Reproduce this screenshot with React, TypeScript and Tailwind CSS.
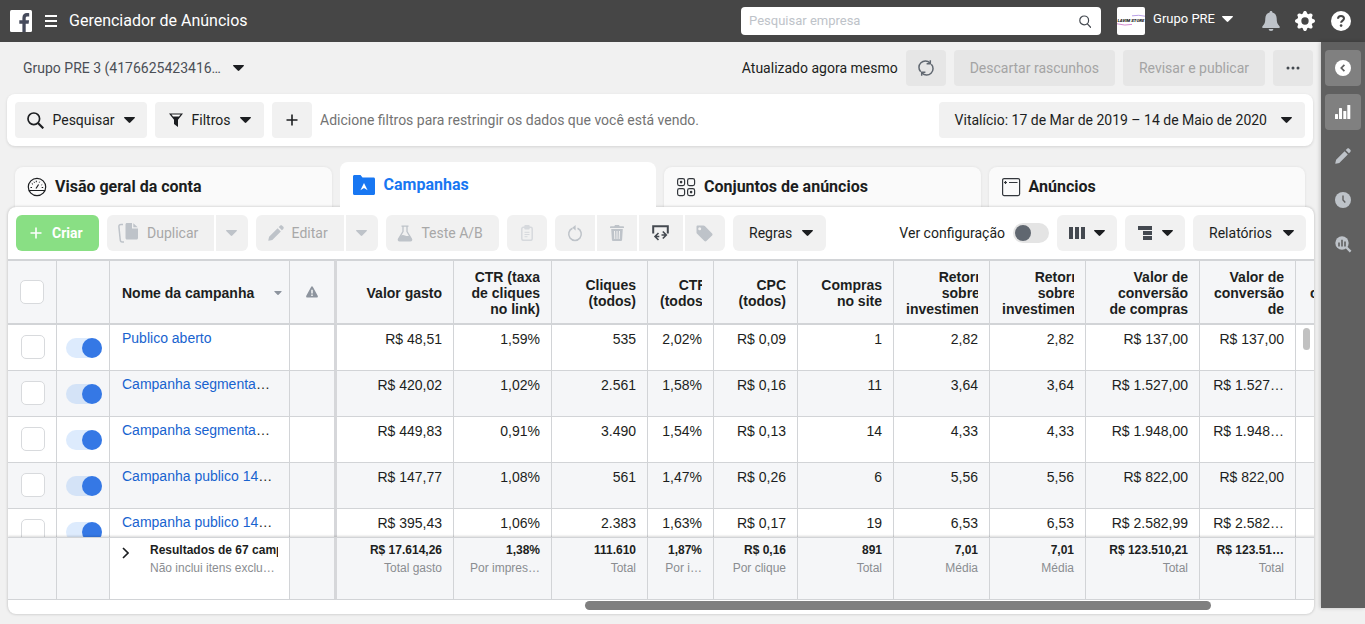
import React from "react";
import { BsGearFill } from "react-icons/bs";

const CARET = "M0 .6C0 .2.3 0 .7 0h9.6c.6 0 .9.7.5 1.1L6.3 5.6c-.4.5-1.2.5-1.6 0L.2 1.1A.7.7 0 0 1 0 .6Z";

function Caret({ className = "text-[#1c1e21]" }: { className?: string }) {
  return (
    <svg width="11" height="6" viewBox="0 0 11 6" className={`shrink-0 ${className}`} fill="currentColor" aria-hidden="true">
      <path d={CARET} />
    </svg>
  );
}

function Btn({ children, className = "", label }: { children: React.ReactNode; className?: string; label?: string }) {
  return (
    <button type="button" aria-label={label} className={`flex h-9 shrink-0 items-center justify-center whitespace-nowrap ${className}`}>
      {children}
    </button>
  );
}

function Header() {
  return (
    <header className="flex h-[42px] shrink-0 items-center bg-[#464646] text-white">
      <a href="#" aria-label="Facebook" className="ml-[10px] block">
        <svg width="22" height="22" viewBox="0 0 22 22" aria-hidden="true">
          <rect width="22" height="22" rx="1.5" fill="#fff" />
          <path d="M12.4 22v-8.2H9.3v-3.5h3.1V7.9c0-3.1 1.8-4.800 4.600-4.800.9 0 1.800.1 2.200.1v3.200h-1.700c-1.300 0-1.800.7-1.800 1.700v2.200h3.400l-.5 3.500h-2.900V22Z" fill="#464b5c" />
        </svg>
      </a>
      <button type="button" aria-label="Menu" className="ml-[13px] flex w-3 flex-col gap-[3px]">
        <span className="h-[2px] w-full bg-white" />
        <span className="h-[2px] w-full bg-white" />
        <span className="h-[2px] w-full bg-white" />
      </button>
      <h1 className="ml-3 text-base">Gerenciador de Anúncios</h1>
      <div className="ml-auto flex h-7 w-[360px] items-center rounded bg-white pl-2 pr-[10px]">
        <input type="text" aria-label="Pesquisar empresa" placeholder="Pesquisar empresa" className="min-w-0 flex-1 bg-transparent text-[13px] text-[#1c1e21] outline-none placeholder:text-[#bec3c9]" />
        <svg width="12" height="13" viewBox="0 0 12 13" fill="none" stroke="#444950" strokeWidth="1.2" aria-hidden="true">
          <circle cx="5.2" cy="5.4" r="4.4" />
          <path d="m8.4 8.8 3.2 3.5" strokeLinecap="round" />
        </svg>
      </div>
      <button type="button" className="ml-4 flex items-center text-[13px]">
        <svg width="28" height="28" viewBox="0 0 28 28" aria-hidden="true">
          <rect width="28" height="28" rx="2" fill="#fff" />
          <path d="M15 8.800q7-1.200 13 .4" fill="none" stroke="#b9a0e6" strokeWidth="1" />
          <path d="M0 16.800q8 2.200 15 .6" fill="none" stroke="#d58bd0" strokeWidth="1" />
          <text x="0.500" y="14.800" fontSize="4.300" fontWeight="900" fontStyle="italic" fontFamily="Roboto, sans-serif" fill="#161616">LAVIM STORE</text>
        </svg>
        <span className="flex items-center pb-1 pl-2">
          <span className="mr-[7px]">Grupo PRE</span>
          <Caret className="text-white" />
        </span>
      </button>
      <button type="button" aria-label="Notificações" className="ml-[29px]">
        <svg width="18" height="22" viewBox="0 0 18 22" fill="#bec3c9" aria-hidden="true">
          <path d="M9 1c.9 0 1.400.6 1.400 1.400 2.700.6 4.300 2.900 4.300 6.100 0 3.800.6 5.400 2.800 7.700.6.700.300 1.800-.8 1.800H1.300c-1.100 0-1.400-1.100-.8-1.800 2.200-2.300 2.800-3.900 2.800-7.700 0-3.200 1.600-5.500 4.300-6.100C7.600 1.600 8.100 1 9 1Z" />
          <path d="M6.600 19h4.800a2.400 2 0 0 1-4.800 0Z" />
        </svg>
      </button>
      <button type="button" aria-label="Configurações" className="ml-[15px]">
        <BsGearFill size={20} aria-hidden="true" />
      </button>
      <button type="button" aria-label="Ajuda" className="ml-4 mr-[14px]">
        <svg width="20" height="20" viewBox="0 0 20 20" aria-hidden="true">
          <circle cx="10" cy="10" r="10" fill="#fff" />
          <path d="M7 7.800c0-1.700 1.200-2.800 3-2.800s3 1.100 3 2.600c0 2-2.900 2-2.900 4.200" fill="none" stroke="#464646" strokeWidth="2" />
          <circle cx="10.100" cy="14.600" r="1.300" fill="#464646" />
        </svg>
      </button>
    </header>
  );
}

function Sidebar() {
  const item = "flex size-9 items-center justify-center rounded";
  return (
    <nav aria-label="Ferramentas" className="mb-4 flex w-11 shrink-0 flex-col items-center gap-2 bg-[#606060] pt-2 text-[#bec3c9] shadow-[-1px_0_4px_rgba(0,0,0,0.2)]">
      <button type="button" aria-label="Recolher" className={`${item} bg-[#808080]`}>
        <svg width="16" height="16" viewBox="0 0 16 16" aria-hidden="true">
          <circle cx="8" cy="8" r="8" fill="#fff" />
          <path d="M9.400 4.800 6.300 8l3.100 3.200" fill="none" stroke="#606060" strokeWidth="1.700" />
        </svg>
      </button>
      <button type="button" aria-label="Gráficos" className={`${item} bg-[#808080]`}>
        <svg width="16" height="14" viewBox="0 0 16 14" fill="#fff" aria-hidden="true">
          <rect x="0" y="9" width="3" height="5" rx=".6" />
          <rect x="4" y="3" width="3" height="11" rx=".6" />
          <rect x="8.300" y="6" width="3" height="8" rx=".6" />
          <rect x="12.300" y="0" width="3" height="14" rx=".6" />
        </svg>
      </button>
      <button type="button" aria-label="Editar" className={item}>
        <Pencil />
      </button>
      <button type="button" aria-label="Histórico" className={item}>
        <svg width="16" height="16" viewBox="0 0 16 16" aria-hidden="true">
          <circle cx="8" cy="8" r="8" fill="currentColor" />
          <path d="M8 3.500V8l2.300 2.500" fill="none" stroke="#606060" strokeWidth="1.400" />
        </svg>
      </button>
      <button type="button" aria-label="Inspecionar" className={item}>
        <svg width="17" height="17" viewBox="0 0 17 17" aria-hidden="true">
          <circle cx="7" cy="7" r="6.700" fill="currentColor" />
          <path d="m11 11 4.600 4.600" stroke="currentColor" strokeWidth="2.400" />
          <path d="M4 6.500v4M7 3.800v6.700M10 5.500v5" stroke="#606060" strokeWidth="1.600" />
        </svg>
      </button>
    </nav>
  );
}

function Pencil() {
  return (
    <svg width="16" height="16" viewBox="0 0 16 16" fill="currentColor" aria-hidden="true">
      <path d="M9.600 3.200 12.800 6.400 4.300 14.900 0.700 15.700c-.3.100-.5-.1-.4-.4l.8-3.600Z" />
      <path d="m10.700 2.100 1.400-1.400c.6-.6 1.500-.6 2.100 0l1.100 1.100c.6.6.6 1.500 0 2.100l-1.400 1.400Z" />
    </svg>
  );
}

function AccountBar() {
  const off = "rounded bg-[#e6e6e6] px-4 text-[#a4a4a4]";
  return (
    <div className="flex h-[52px] shrink-0 items-center gap-2 pl-4">
      <button type="button" className="flex items-center text-[#4b4f56]">
        <span>Grupo PRE 3 (4176625423416…</span>
        <span className="ml-3"><Caret /></span>
      </button>
      <span className="ml-auto text-[#1c1e21]">Atualizado agora mesmo</span>
      <Btn label="Atualizar" className="w-10 rounded bg-[#e6e6e6]">
        <svg width="16" height="16" viewBox="0 0 16 16" fill="none" stroke="#606770" strokeWidth="1.500" aria-hidden="true">
          <path d="M2.700 11.800A6.400 6.400 0 0 1 12 3M13.300 4.200A6.400 6.400 0 0 1 4 13" />
          <path d="M12.300.2v3.600H8.600M3.700 15.800v-3.600h3.700" />
        </svg>
      </Btn>
      <Btn className={off}>Descartar rascunhos</Btn>
      <Btn className={off}>Revisar e publicar</Btn>
      <Btn label="Mais opções" className="w-10 rounded bg-[#e6e6e6]">
        <svg width="14" height="4" viewBox="0 0 14 4" fill="#444950" aria-hidden="true">
          <circle cx="2" cy="2" r="1.500" />
          <circle cx="7" cy="2" r="1.500" />
          <circle cx="12" cy="2" r="1.500" />
        </svg>
      </Btn>
    </div>
  );
}

function FilterBar() {
  const b = "rounded bg-[#f1f1f1] text-[#1c1e21]";
  return (
    <section className="flex h-[52px] shrink-0 items-center gap-2 rounded-lg bg-white px-2 shadow-[0_1px_3px_rgba(0,0,0,0.12)]">
      <Btn className={`${b} w-[132px] gap-2`}>
        <svg width="17" height="17" viewBox="0 0 17 17" fill="none" stroke="#1c1e21" strokeWidth="1.700" aria-hidden="true">
          <circle cx="6.800" cy="6.800" r="5.800" />
          <path d="m11 11 5.300 5.300" strokeWidth="2.200" />
        </svg>
        <span className="mr-px">Pesquisar</span>
        <Caret />
      </Btn>
      <Btn className={`${b} w-[109px] gap-2`}>
        <svg width="16" height="16" viewBox="0 0 16 16" aria-hidden="true">
          <path d="M1 1.500h14l-5 6.300V15L6 12V7.800Z" fill="#1c1e21" />
          <path d="M3.400 2.600h9.200L11 4.600H5Z" fill="#fff" />
        </svg>
        <span className="mr-[2px]">Filtros</span>
        <Caret />
      </Btn>
      <Btn label="Adicionar filtro" className={`${b} w-10`}>
        <svg width="12" height="12" viewBox="0 0 12 12" stroke="#1c1e21" strokeWidth="1.600" aria-hidden="true">
          <path d="M6 .5v11M.5 6h11" />
        </svg>
      </Btn>
      <span className="min-w-0 flex-1 truncate text-[#737373]">Adicione filtros para restringir os dados que você está vendo.</span>
      <Btn className={`${b} px-[13px]`}>
        <span className="ml-[3px] mr-[14px]">Vitalício: 17 de Mar de 2019 – 14 de Maio de 2020</span>
        <Caret />
      </Btn>
    </section>
  );
}

function Tabs() {
  const t = "flex h-[41px] items-center rounded-t-lg bg-[#fafafa] pb-0.5 pl-3 text-base font-bold text-[#1c1e21] shadow-[0_0_3px_rgba(0,0,0,0.08)]";
  return (
    <div role="tablist" className="grid shrink-0 grid-cols-4 items-end gap-2 px-2 pt-4">
      <button type="button" role="tab" aria-selected="false" className={t}>
        <svg width="20" height="20" viewBox="0 0 20 20" fill="none" stroke="#1c1e21" aria-hidden="true">
          <circle cx="10" cy="10" r="8.700" strokeWidth="1.200" />
          <path d="M2 13.500h16M9 11.500l2.600-4" strokeWidth="1.200" />
          <path d="M3.500 10.500h1.500M4.800 6.500l1.200.8M9.300 3.700v1.500M14.700 10.500h1.500M7 4.800l.5 1M15.200 7.500l-.8.5M12.700 4.700l-.4.900" />
        </svg>
        <span className="ml-2">Visão geral da conta</span>
      </button>
      <button type="button" role="tab" aria-selected="true" className="relative z-20 flex h-[46px] items-center rounded-t-lg bg-white pl-[13px] text-base font-bold text-[#1877f2]">
        <svg width="22" height="20" viewBox="0 0 22 20" aria-hidden="true">
          <path d="M0 1.500C0 .6.600 0 1.500 0h6l2 2.500h11c.9 0 1.500.6 1.500 1.500v14.500c0 .9-.6 1.500-1.500 1.500h-19C.6 20 0 19.400 0 18.500Z" fill="#1877f2" />
          <path d="m11 8 3.600 7.200L11 13.100l-3.600 2.100Z" fill="#fff" />
        </svg>
        <span className="ml-[9px]">Campanhas</span>
      </button>
      <button type="button" role="tab" aria-selected="false" className={t}>
        <svg width="20" height="20" viewBox="0 0 20 20" fill="none" stroke="#33373c" strokeWidth="1.200" aria-hidden="true">
          <rect x="1.600" y="1.600" width="7" height="7" rx="1.800" />
          <rect x="11.600" y="1.600" width="7" height="7" rx="1.800" />
          <rect x="1.600" y="11.600" width="7" height="7" rx="1.800" />
          <rect x="11.600" y="11.600" width="7" height="7" rx="1.800" />
          <circle cx="5.100" cy="5.100" r=".7" fill="#33373c" />
          <circle cx="15.100" cy="15.100" r=".7" fill="#33373c" />
        </svg>
        <span className="ml-2">Conjuntos de anúncios</span>
      </button>
      <button type="button" role="tab" aria-selected="false" className={t}>
        <svg width="20" height="20" viewBox="0 0 20 20" fill="none" stroke="#33373c" strokeWidth="1.200" aria-hidden="true">
          <rect x="1.600" y="1.600" width="17" height="17" rx="1.500" />
          <path d="M8 5.500h8.500M4.500 4v3M3 5.500h3" />
        </svg>
        <span className="ml-2">Anúncios</span>
      </button>
    </div>
  );
}

function Toolbar() {
  const off = "bg-[#f1f1f1] text-[#bec3c9]";
  const txt = "text-[#a8a8a8]";
  const on = "rounded-md bg-[#f1f1f1] text-[#1c1e21]";
  return (
    <div className="flex h-[52px] shrink-0 items-center gap-2 px-2">
      <Btn className="gap-[10px] rounded-md bg-[#89df84] px-[14px] pr-4 font-bold text-white">
        <svg width="12" height="12" viewBox="0 0 12 12" stroke="#fff" strokeWidth="1.600" aria-hidden="true">
          <path d="M6 .5v11M.5 6h11" />
        </svg>
        Criar
      </Btn>
      <div className="flex gap-[2px]">
        <Btn className={`${off} w-[107px] gap-2 rounded-l-md pr-1`}>
          <svg width="21" height="20" viewBox="0 0 21 20" aria-hidden="true">
            <path d="M5 1.500H3C1.600 1.500.8 2.400.9 3.700L2.200 16.500c.1 1.400.9 2.600 2 2.600H6" fill="none" stroke="currentColor" strokeWidth="1.500" />
            <path d="M7.500 1.500C7.500.6 8.100 0 9 0h5v5.500h6v9.500c0 .9-.6 1.500-1.500 1.500H9c-.9 0-1.500-.6-1.500-1.500ZM15.300.3l4.400 4h-4.400Z" fill="currentColor" />
          </svg>
          <span className={txt}>Duplicar</span>
        </Btn>
        <Btn label="Opções de duplicação" className={`${off} w-8 rounded-r-md`}><Caret className="text-[#bec3c9]" /></Btn>
      </div>
      <div className="flex gap-[2px]">
        <Btn className={`${off} w-[88px] gap-2 rounded-l-md pr-1`}>
          <Pencil />
          <span className={txt}>Editar</span>
        </Btn>
        <Btn label="Opções de edição" className={`${off} w-8 rounded-r-md`}><Caret className="text-[#bec3c9]" /></Btn>
      </div>
      <Btn className={`${off} w-[113px] gap-2 rounded-md pr-1`}>
        <svg width="16" height="17" viewBox="0 0 16 17" aria-hidden="true">
          <path d="M4.500 1.200h7M6 1v5.500L1.500 14c-.4.900 0 1.800 1 1.800h11c1 0 1.400-.9 1-1.800L10 6.500V1" fill="none" stroke="currentColor" strokeWidth="1.300" />
          <path d="M3.500 10.500q2.500-1 4.500 0t4.500 0l2.200 4c.3.800-.2 1.500-1 1.500H2.300c-.8 0-1.300-.7-1-1.500Z" fill="currentColor" />
        </svg>
        <span className={txt}>Teste A/B</span>
      </Btn>
      <Btn label="Colar" className="w-10 rounded-md bg-[#f1f1f1] text-[#d6d9dd]">
        <svg width="12" height="16" viewBox="0 0 12 16" aria-hidden="true">
          <rect x=".8" y="2.300" width="10.400" height="13" rx="1.500" fill="none" stroke="currentColor" strokeWidth="1.500" />
          <rect x="3.300" y="0" width="5.400" height="4.500" rx="1" fill="currentColor" />
          <path d="M3.500 7.300h5M3.500 9.500h5M3.500 11.700h3" stroke="currentColor" />
        </svg>
      </Btn>
      <div className="flex gap-[2px]">
        <Btn label="Reverter" className={`${off} w-10 rounded-l-md`}>
          <svg width="16" height="17" viewBox="0 0 16 17" aria-hidden="true">
            <path d="M5.500 3.300a6.300 6.300 0 1 0 5 0" fill="none" stroke="currentColor" strokeWidth="1.500" />
            <path d="M8.600 0v5.500L5.300 2.700Z" fill="currentColor" />
          </svg>
        </Btn>
        <Btn label="Excluir" className={`${off} w-10`}>
          <svg width="14" height="16" viewBox="0 0 14 16" fill="currentColor" aria-hidden="true">
            <path d="M5 0h4l.7 1.200h3.500c.5 0 .8.3.8.8v1H0V2c0-.5.300-.8.800-.8h3.500Z" />
            <path fillRule="evenodd" d="M1.200 4h11.600l-.7 10.700c-.1.800-.6 1.300-1.400 1.300H3.300c-.8 0-1.300-.5-1.400-1.300ZM4 6l.3 8h1L5 6Zm2.500 0v8h1V6ZM9 6l-.3 8h1L10 6Z" />
          </svg>
        </Btn>
        <Btn label="Exportar" className="w-11 bg-[#f1f1f1]">
          <svg width="17" height="16" viewBox="0 0 17 16" fill="none" stroke="#444950" strokeWidth="2" aria-hidden="true">
            <path d="M1.200 8.500V1.300h14.600V8.500" />
            <path d="M7.300 11.500H3.500m3-3.500L3 11.500 6.500 15M9.500 10H14m-3.200-3.500L14.300 10l-3.500 3.500" strokeWidth="1.600" />
          </svg>
        </Btn>
        <Btn label="Marcadores" className={`${off} w-10 rounded-r-md`}>
          <svg width="17" height="17" viewBox="0 0 17 17" fill="currentColor" aria-hidden="true">
            <path fillRule="evenodd" d="M.5 1.800C.5 1 1 .5 1.800.5h5.600c.6 0 1 .2 1.400.6l7.300 7.300c.6.600.6 1.500 0 2l-5.700 5.700c-.5.600-1.400.6-2 0L1.100 8.800C.7 8.400.5 8 .5 7.400ZM3.700 2.300a1.500 1.500 0 1 0 0 3 1.500 1.500 0 0 0 0-3Z" />
          </svg>
        </Btn>
      </div>
      <Btn className={`${on} w-[93px] gap-[10px] pl-1`}>Regras <Caret /></Btn>
      <label className="ml-auto flex items-center gap-2 whitespace-nowrap text-[#1c1e21]">
        Ver configuração
        <input type="checkbox" role="switch" className="h-5 w-9 appearance-none rounded-full bg-[#e4e4e4] before:block before:size-4 before:translate-x-[2px] before:translate-y-[2px] before:rounded-full before:bg-[#606770]" />
      </label>
      <Btn label="Colunas" className={`${on} w-[60px] gap-[9px]`}>
        <svg width="16" height="12" viewBox="0 0 16 12" fill="#444950" aria-hidden="true">
          <path d="M0 0h4v12H0ZM6 0h4v12H6ZM12 0h4v12h-4Z" />
        </svg>
        <Caret />
      </Btn>
      <Btn label="Detalhamento" className={`${on} w-[60px] gap-[10px]`}>
        <svg width="14" height="14" viewBox="0 0 14 14" fill="#444950" aria-hidden="true">
          <path d="M0 0h14v4H0ZM5 5h9v4H5ZM5 10h9v4H5Z" />
        </svg>
        <Caret />
      </Btn>
      <Btn className={`${on} w-[113px] gap-[11px] pl-1`}>Relatórios <Caret /></Btn>
    </div>
  );
}

type Column = { head: string[]; cells: string[]; total: string; note: string };

const columns: Column[] = [
  { head: ["Valor gasto"], cells: ["R$ 48,51", "R$ 420,02", "R$ 449,83", "R$ 147,77", "R$ 395,43"], total: "R$ 17.614,26", note: "Total gasto" },
  { head: ["CTR (taxa", "de cliques", "no link)"], cells: ["1,59%", "1,02%", "0,91%", "1,08%", "1,06%"], total: "1,38%", note: "Por impres…" },
  { head: ["Cliques", "(todos)"], cells: ["535", "2.561", "3.490", "561", "2.383"], total: "111.610", note: "Total" },
  { head: ["CTR", "(todos)"], cells: ["2,02%", "1,58%", "1,54%", "1,47%", "1,63%"], total: "1,87%", note: "Por i…" },
  { head: ["CPC", "(todos)"], cells: ["R$ 0,09", "R$ 0,16", "R$ 0,13", "R$ 0,26", "R$ 0,17"], total: "R$ 0,16", note: "Por clique" },
  { head: ["Compras", "no site"], cells: ["1", "11", "14", "6", "19"], total: "891", note: "Total" },
  { head: ["Retorno", "sobre o", "investimento"], cells: ["2,82", "3,64", "4,33", "5,56", "6,53"], total: "7,01", note: "Média" },
  { head: ["Retorno", "sobre o", "investimento"], cells: ["2,82", "3,64", "4,33", "5,56", "6,53"], total: "7,01", note: "Média" },
  { head: ["Valor de", "conversão", "de compras"], cells: ["R$ 137,00", "R$ 1.527,00", "R$ 1.948,00", "R$ 822,00", "R$ 2.582,99"], total: "R$ 123.510,21", note: "Total" },
  { head: ["Valor de", "conversão", "de"], cells: ["R$ 137,00", "R$ 1.527…", "R$ 1.948…", "R$ 822,00", "R$ 2.582…"], total: "R$ 123.51…", note: "Total" },
  { head: ["conversão"], cells: ["", "", "", "", ""], total: "", note: "" },
];

const names = ["Publico aberto", "Campanha segmenta", "Campanha segmenta", "Campanha publico 14", "Campanha publico 14"];

function Grid() {
  const th = "border-b-2 border-t-2 border-r border-[#d2d4d7] bg-[#f5f6f8] p-0 align-middle";
  const td = "border-b border-r border-[#d2d4d7] p-0 align-top";
  const tf = "border-b border-t border-r border-[#d2d4d7] bg-[#f5f6f8] p-0 align-top";
  const edge = "border-r-[3px] border-r-[#d6d7da]";
  const check = "block size-6 appearance-none rounded-[5px] border border-[#d8dadd] bg-white";
  return (
    <div className="relative min-h-0 flex-1 overflow-hidden">
      <table className="w-[1384px] table-fixed border-separate border-spacing-0 text-sm text-[#1c1e21] [font-family:'Liberation_Sans',Arial,sans-serif]">
        <colgroup>
          <col className="w-[49px]" />
          <col className="w-[53px]" />
          <col className="w-[180px]" />
          <col className="w-[47px]" />
          <col className="w-[117px]" />
          <col className="w-[98px]" />
          <col className="w-[96px]" />
          <col className="w-[66px]" />
          <col className="w-[84px]" />
          <col className="w-[96px]" />
          <col className="w-[96px]" />
          <col className="w-[96px]" />
          <col className="w-[114px]" />
          <col className="w-[96px]" />
          <col className="w-[96px]" />
        </colgroup>
        <thead className="sticky top-0 z-10">
          <tr className="h-[66px]">
            <th className={th}>
              <input type="checkbox" aria-label="Selecionar tudo" className={`${check} ml-3`} />
            </th>
            <th className={th} aria-label="Status" />
            <th className={th}>
              <span className="flex items-center justify-between pl-3 pr-[7px] pt-0.5">
                Nome da campanha
                <svg width="8" height="4" viewBox="0 0 11 6" fill="#8d949e" aria-hidden="true"><path d={CARET} /></svg>
              </span>
            </th>
            <th className={`${th} ${edge}`} aria-label="Alertas">
              <svg width="12" height="12" viewBox="0 0 12 12" className="mx-auto" aria-hidden="true">
                <path d="M5.200.7c.4-.7 1.200-.7 1.600 0l4.900 9.100c.4.700 0 1.700-.9 1.700H1.200c-.9 0-1.300-1-.9-1.700Z" fill="#8d949e" />
                <path d="M6 3.800v3.700M6 8.500V10" stroke="#f5f6f8" strokeWidth="1.500" />
              </svg>
            </th>
            {columns.map((c, i) => (
              <th key={i} className={th}>
                <div className="ml-3 mr-[11px] overflow-hidden pt-0.5 text-right leading-4">
                  <div className="w-max min-w-full">
                    {c.head.map((h) => (
                      <span key={h} className="block">{h}</span>
                    ))}
                  </div>
                </div>
              </th>
            ))}
          </tr>
        </thead>
        <tbody>
          {names.map((n, r) => (
            <tr key={r} className="h-[46px] bg-white even:bg-[#f5f6f8]">
              <td className={td}>
                <input type="checkbox" aria-label={`Selecionar ${n}`} className={`${check} ml-[13px] mt-[10px]`} />
              </td>
              <td className={td}>
                <input type="checkbox" role="switch" defaultChecked aria-label={`Ativar ${n}`} className="ml-[9px] mt-[13px] block h-5 w-9 appearance-none rounded-full bg-[#1877f2]/15 before:ml-auto before:block before:size-5 before:rounded-full before:bg-[#3578e5]" />
              </td>
              <td className={td}>
                <div className="whitespace-nowrap pl-3 pt-[3px]">
                  <a href="#" className="text-[#1863cf]">{n}</a>
                  {r > 0 && "…"}
                </div>
              </td>
              <td className={`${td} ${edge}`} />
              {columns.map((c, i) => (
                <td key={i} className={td}>
                  <div className="whitespace-nowrap pr-[11px] pt-1 text-right">{c.cells[r]}</div>
                </td>
              ))}
            </tr>
          ))}
        </tbody>
        <tfoot className="sticky bottom-0 z-10 text-xs shadow-[0_-1px_2px_rgba(0,0,0,0.15)]">
          <tr className="h-[63px]">
            <td className={tf} />
            <td className={tf} />
            <td className="border-b border-r border-t border-[#d2d4d7] bg-white p-0 align-top">
              <div className="flex pr-[11px] pt-[3px]">
                <button type="button" aria-label="Expandir" className="ml-3 mt-[6px] flex w-7 shrink-0 self-start">
                  <svg width="7" height="12" viewBox="0 0 7 12" fill="none" stroke="#1c1e21" strokeWidth="1.600" aria-hidden="true">
                    <path d="m1 1 5 5-5 5" />
                  </svg>
                </button>
                <div className="min-w-0 overflow-hidden whitespace-nowrap leading-[18px]">
                  <div className="font-bold">Resultados de 67 campanhas</div>
                  <div className="text-[#8a8d91]">Não inclui itens exclu…</div>
                </div>
              </div>
            </td>
            <td className={`${tf} ${edge}`} />
            {columns.map((c, i) => (
              <td key={i} className={tf}>
                <div className="whitespace-nowrap pr-[11px] pt-[3px] text-right leading-[18px]">
                  <div className="font-bold">{c.total}</div>
                  <div className="text-[#8a8d91]">{c.note}</div>
                </div>
              </td>
            ))}
          </tr>
        </tfoot>
      </table>
      <div className="absolute right-1 top-[69px] z-10 h-[22px] w-[7px] rounded bg-[#c1c1c1]" />
    </div>
  );
}

export default function App() {
  return (
    <div className="flex h-screen min-h-[420px] flex-col bg-[#f1f1f1] text-sm [font-family:Roboto,'Liberation_Sans',sans-serif]">
      <Header />
      <div className="flex min-h-0 flex-1">
        <main className="flex min-w-0 flex-1 flex-col pb-[10px] pl-[7px] pr-2">
          <AccountBar />
          <FilterBar />
          <Tabs />
          <section className="relative z-10 -mr-px -mt-px ml-px flex min-h-0 flex-1 flex-col overflow-hidden rounded-lg bg-white shadow-[0_0_3px_rgba(0,0,0,0.25)]">
            <Toolbar />
            <Grid />
            <div className="flex h-[14px] shrink-0 pt-px">
              <div className="ml-[44.2%] h-[9px] w-[47.9%] rounded-full bg-[#7f7f7f]" />
            </div>
          </section>
        </main>
        <Sidebar />
      </div>
    </div>
  );
}
